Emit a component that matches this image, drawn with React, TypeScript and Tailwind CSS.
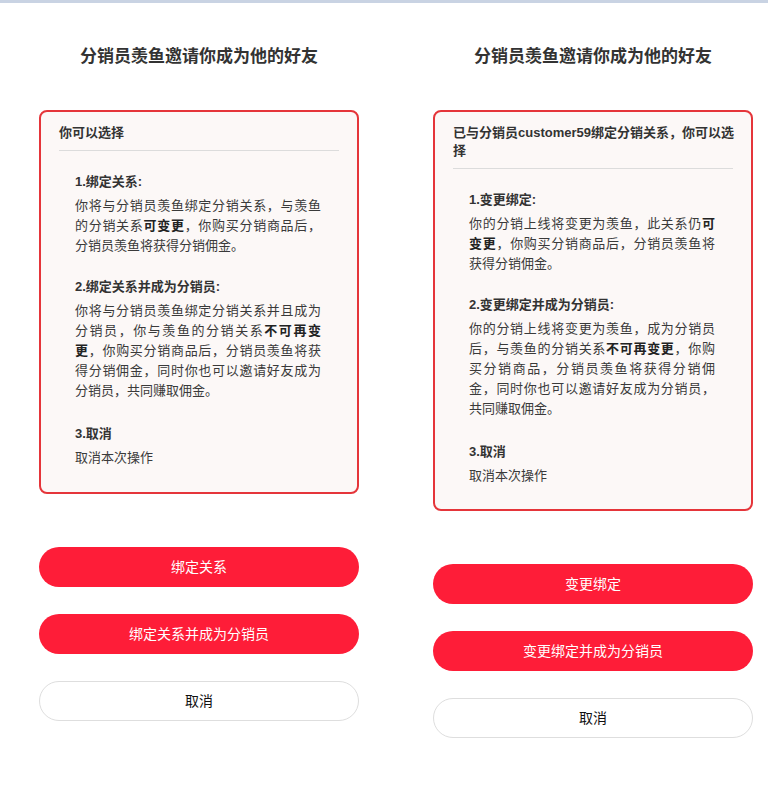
import React from "react";

type Section = { title: React.ReactNode; body: React.ReactNode; extra?: boolean };

function Column({
  header,
  sections,
  buttons,
  tight,
}: {
  header: React.ReactNode;
  sections: Section[];
  buttons: string[];
  tight?: boolean;
}) {
  return (
    <div className="w-[320px] flex flex-col">
      <div className="h-[26px] leading-[26px] text-center text-[17px] font-bold text-[#333] mt-[41px]">
        分销员羡鱼邀请你成为他的好友
      </div>
      <div
        className={
          "mt-[40px] border-2 border-[#e5353a] rounded-[8px] bg-[#fcf8f7] px-[18px] pt-[12px] " +
          (tight ? "pb-[23px]" : "pb-[24px]")
        }
      >
        <div className="text-[13px] font-bold text-[#333] leading-[18px] pb-[8px] border-b border-[#dcdcdc]">
          {header}
        </div>
        <div className="pl-[16px] pr-[18px] pt-[21px]">
          {sections.map((s, i) => (
            <div key={i} className={i === 0 ? "" : s.extra ? "mt-[23px]" : "mt-[21px]"}>
              <div className="text-[13px] font-bold text-[#333] leading-[20px]">{s.title}</div>
              <div className="mt-[4px] text-[13px] text-[#3a3a3a] leading-[20px] text-justify">
                {s.body}
              </div>
            </div>
          ))}
        </div>
      </div>
      <div className="mt-[53px] flex flex-col">
        {buttons.map((b, i) => (
          <div
            key={i}
            className={
              "h-[40px] rounded-full flex items-center justify-center text-[14px] text-white bg-[#fe1d38] " +
              (i === 0 ? "" : "mt-[27px]")
            }
          >
            {b}
          </div>
        ))}
        <div className="mt-[27px] h-[40px] rounded-full flex items-center justify-center text-[14px] text-[#111] bg-white border border-[#dedede]">
          取消
        </div>
      </div>
    </div>
  );
}

export default function App() {
  const B = ({ children }: { children: React.ReactNode }) => (
    <b className="font-bold text-[#222]">{children}</b>
  );
  return (
    <div
      className="w-[768px] h-[793px] bg-white overflow-hidden"
      style={{ fontFamily: '"Liberation Sans", "Noto Sans CJK SC", sans-serif' }}
    >
      <div className="h-[3px] bg-[#c9d3e3]" />
      <div className="flex pl-[39px] gap-[74px]">
        <Column
          header={<>你可以选择</>}
          sections={[
            {
              title: "1.绑定关系:",
              body: (
                <>
                  你将与分销员羡鱼绑定分销关系，与羡鱼的分销关系<B>可变更</B>，你购买分销商品后，分销员羡鱼将获得分销佣金。
                </>
              ),
            },
            {
              title: "2.绑定关系并成为分销员:",
              body: (
                <>
                  你将与分销员羡鱼绑定分销关系并且成为分销员，你与羡鱼的分销关系<B>不可再变更</B>，你购买分销商品后，分销员羡鱼将获得分销佣金，同时你也可以邀请好友成为分销员，共同赚取佣金。
                </>
              ),
            },
            { title: "3.取消", body: "取消本次操作", extra: true },
          ]}
          buttons={["绑定关系", "绑定关系并成为分销员"]}
        />
        <Column
          tight
          header={
            <>
              <span className="whitespace-nowrap">已与分销员customer59绑定分销关系，你可以选</span>
              <br />
              择
            </>
          }
          sections={[
            {
              title: "1.变更绑定:",
              body: (
                <>
                  你的分销上线将变更为羡鱼，此关系仍<B>可变更</B>，你购买分销商品后，分销员羡鱼将获得分销佣金。
                </>
              ),
            },
            {
              title: "2.变更绑定并成为分销员:",
              body: (
                <>
                  你的分销上线将变更为羡鱼，成为分销员后，与羡鱼的分销关系<B>不可再变更</B>，你购买分销商品，分销员羡鱼将获得分销佣金，同时你也可以邀请好友成为分销员，共同赚取佣金。
                </>
              ),
            },
            { title: "3.取消", body: "取消本次操作", extra: true },
          ]}
          buttons={["变更绑定", "变更绑定并成为分销员"]}
        />
      </div>
    </div>
  );
}
